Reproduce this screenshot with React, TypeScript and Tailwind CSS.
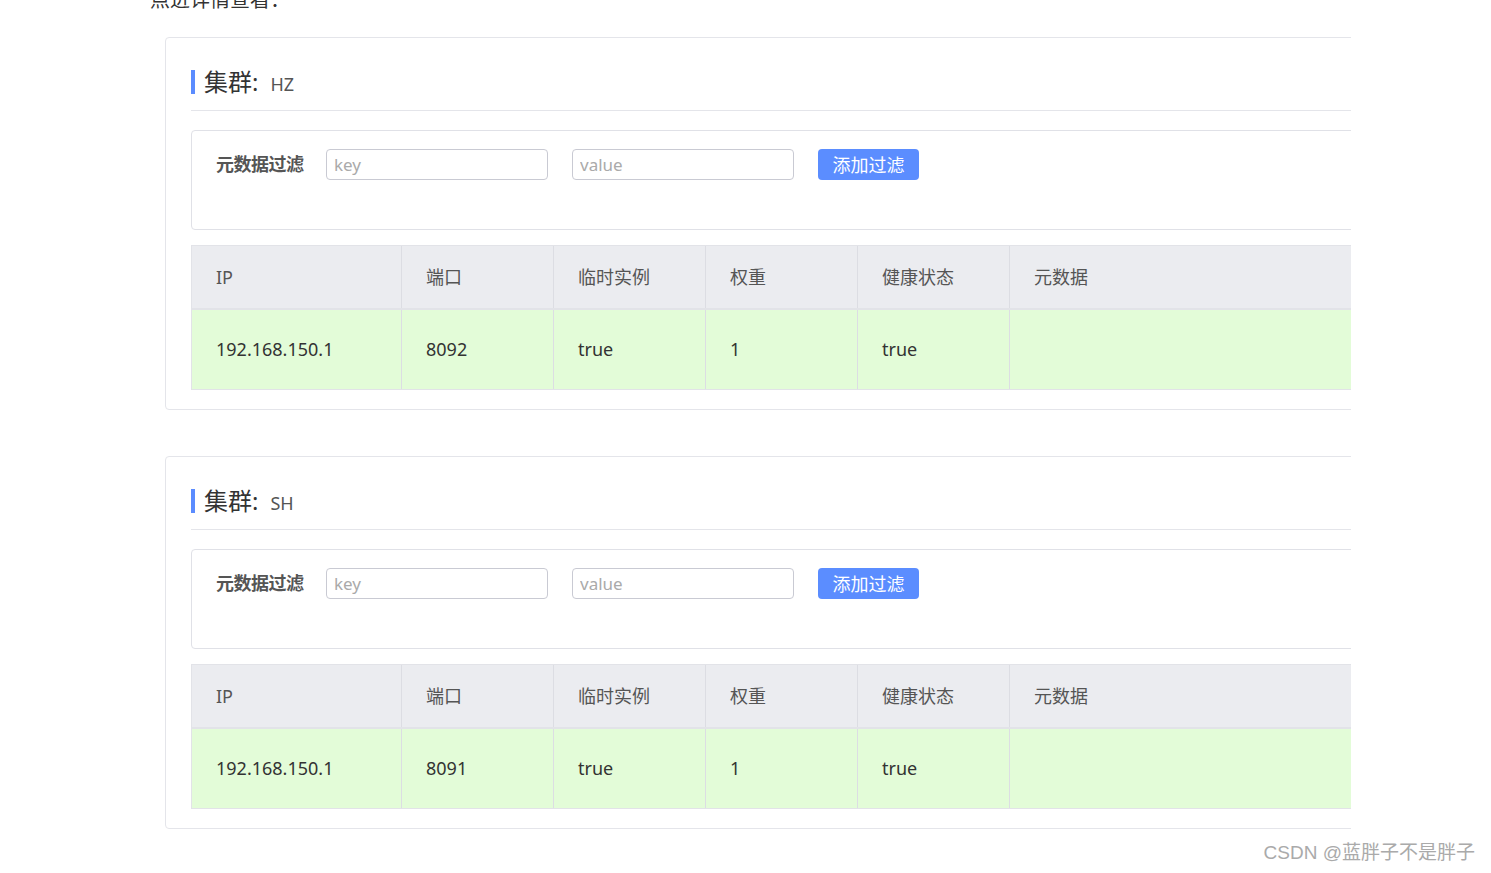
const COLS = [
  { key: 'ip', label: 'IP', w: 'w-[210px]' },
  { key: 'port', label: '端口', w: 'w-[152px]' },
  { key: 'ephemeral', label: '临时实例', w: 'w-[152px]' },
  { key: 'weight', label: '权重', w: 'w-[152px]' },
  { key: 'healthy', label: '健康状态', w: 'w-[152px]' },
  { key: 'meta', label: '元数据', w: 'flex-1' },
];

const CLUSTERS = [
  { name: 'HZ', row: { ip: '192.168.150.1', port: '8092', ephemeral: 'true', weight: '1', healthy: 'true', meta: '' } },
  { name: 'SH', row: { ip: '192.168.150.1', port: '8091', ephemeral: 'true', weight: '1', healthy: 'true', meta: '' } },
];

type Row = Record<string, string>;

function ClusterCard({ name, row }: { name: string; row: Row }) {
  return (
    <div className="w-[1300px] rounded-[4px] border border-[#e4e5ea] bg-white px-[25px] pb-[19px]">
      {/* header */}
      <div className="flex items-center h-[73px] pt-[15px] border-b border-[#e4e5ea]">
        <span className="w-[4px] h-[24px] bg-[#5b8cff] mr-[9px]" />
        <span className="text-[24px] leading-none text-[#333]">集群:</span>
        <span className="text-[18px] leading-none text-[#555] ml-[12px] mt-[4px]">{name}</span>
      </div>

      {/* filter */}
      <div className="mt-[19px] h-[100px] rounded-[4px] border border-[#e0e1e7] pl-[24px] pt-[18px]">
        <div className="flex items-center h-[31px]">
          <span className="text-[18px] font-bold text-[#555] w-[110px] tracking-[-0.5px]">元数据过滤</span>
          <input
            placeholder="key"
            className="w-[222px] h-[31px] rounded-[4px] border border-[#c9cad3] px-[7px] text-[17px] text-[#333] placeholder:text-[#aaa] outline-none"
          />
          <input
            placeholder="value"
            className="ml-[24px] w-[222px] h-[31px] rounded-[4px] border border-[#c9cad3] px-[7px] text-[17px] text-[#333] placeholder:text-[#aaa] outline-none"
          />
          <button className="ml-[24px] w-[101px] h-[31px] rounded-[4px] bg-[#5b8dff] text-white text-[18px] leading-none">
            添加过滤
          </button>
        </div>
      </div>

      {/* table */}
      <div className="mt-[15px] border border-[#e2e3e8]">
        <div className="flex h-[64px] bg-[#ebecf0] border-b-2 border-[#e2e3e8]">
          {COLS.map((c, i) => (
            <div
              key={c.key}
              className={`${c.w} flex items-center pl-[24px] text-[18px] text-[#555] ${i < COLS.length - 1 ? 'border-r border-[#dcdde3]' : ''}`}
            >
              {c.label}
            </div>
          ))}
        </div>
        <div className="flex h-[79px] bg-[#e3fcd8]">
          {COLS.map((c, i) => (
            <div
              key={c.key}
              className={`${c.w} flex items-center pl-[24px] text-[18px] text-[#333] ${i < COLS.length - 1 ? 'border-r border-[#dcdde3]' : ''}`}
            >
              {row[c.key]}
            </div>
          ))}
        </div>
      </div>
    </div>
  );
}

export default function App() {
  return (
    <div
      className="relative w-[1491px] h-[873px] bg-white overflow-hidden"
      style={{ fontFamily: '"Noto Sans", "Noto Sans CJK SC", sans-serif' }}
    >
      <div className="w-[1351px] overflow-hidden">
        <div className="pl-[150px] -mt-[14px] h-[51px] text-[20px] leading-[28px] text-[#333]">点进详情查看：</div>
        <div className="pl-[165px] flex flex-col gap-[46px]">
          {CLUSTERS.map((c) => (
            <ClusterCard key={c.name} name={c.name} row={c.row} />
          ))}
        </div>
      </div>
      <div className="absolute right-[16px] bottom-[6px] text-[19px] text-[#aaa]" style={{ fontFamily: '"Liberation Sans", "Noto Sans CJK SC", sans-serif' }}>
        CSDN @蓝胖子不是胖子
      </div>
    </div>
  );
}
